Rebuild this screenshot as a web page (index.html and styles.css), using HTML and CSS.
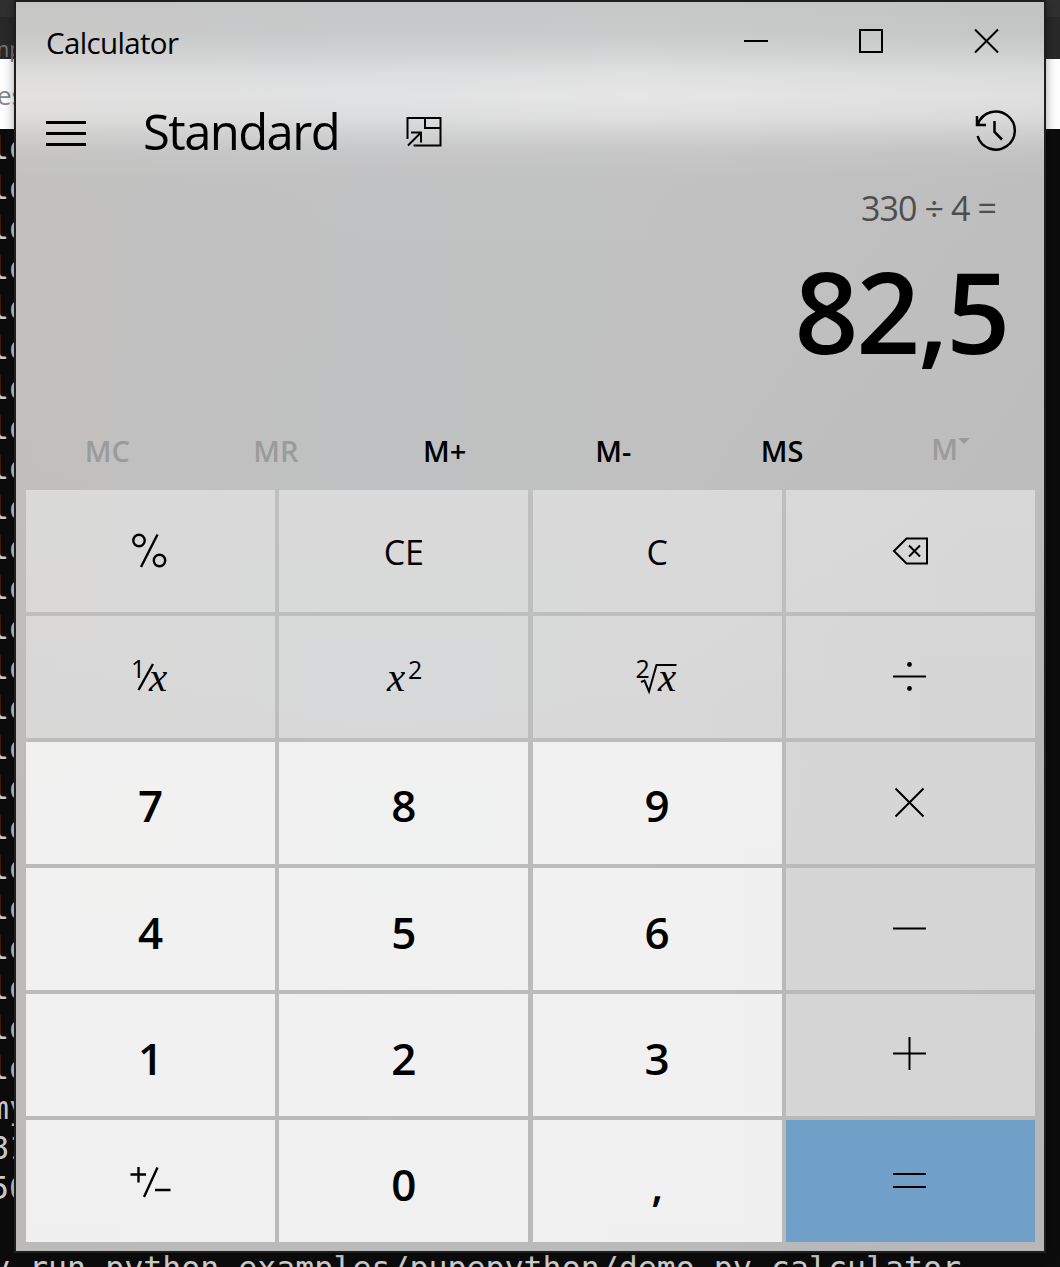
FILE: index.html
```html
<!DOCTYPE html>
<html lang="en">
<head>
<meta charset="utf-8">
<title>Calculator</title>
<link rel="stylesheet" href="styles.css">
</head>
<body>
<div class="desktop">
  <div class="tabs"><span>mp</span></div>
  <div class="toolbar"><span>es</span></div>
  <pre class="terminal">lo
lo
lo
lo
lo
lo
lo
lo
lo
lo
lo
lo
lo
lo
lo
lo
lo
lo
lo
lo
lo
lo
lo
lo
my
81
56

<span class="command">y run python examples/pupepython/demo.py calculator</span></pre>

  <main class="window">
    <header class="titlebar">
      <span class="title">Calculator</span>
      <div class="controls">
        <svg width="115" height="80" viewBox="0 0 115 80"><path d="M45 39h24"/></svg>
        <svg width="115" height="80" viewBox="0 0 115 80"><path d="M46 28h22v22h-22z"/></svg>
        <svg width="115" height="80" viewBox="0 0 115 80"><path d="M46 27.500l23 23M69 27.500l-23 23"/></svg>
      </div>
    </header>
    <nav class="modebar">
      <svg class="menu" width="40" height="28" viewBox="0 0 40 28"><path d="M0 2.500h40M0 13.500h40M0 24.500h40"/></svg>
      <h1 class="mode">Standard</h1>
      <svg class="pin" width="36" height="32" viewBox="0 0 36 32"><path d="M1.500 23V2h33v27.500H7.500M19 2v10h15.500M2 29.500L14 17.500M5 16.500h10v10"/></svg>
      <svg class="history" width="42" height="42" viewBox="0 0 42 42"><path d="M3 14A19 19 0 1 1 2.600 26M2 6v9h9M19.500 11v11l7.500 7.500"/></svg>
    </nav>
    <section class="display">
      <div class="expression">330 ÷ 4 =</div>
      <div class="result">82,5</div>
    </section>
    <div class="memory">
      <button class="off">MC</button><button class="off">MR</button><button>M+</button><button>M-</button><button>MS</button><button class="off list">M<svg width="12" height="7" viewBox="0 0 12 7"><path d="M0 0h12l-6 6z"/></svg></button>
    </div>
    <div class="keys">
      <button class="key"><svg class="sym" width="60" height="60" viewBox="0 0 60 60"><g class="heavy"><circle cx="19" cy="19.500" r="5.700"/><circle cx="39.500" cy="39.500" r="5.700"/><path d="M37.500 13.500L21 46"/></g></svg></button>
      <button class="key"><span>CE</span></button>
      <button class="key"><span>C</span></button>
      <button class="key op"><svg class="sym" width="60" height="60" viewBox="0 0 60 60"><path d="M14 30L26.500 17.500h20.500v25h-20.500zM29 24.500l11 11M40 24.500l-11 11"/></svg></button>

      <button class="key"><svg class="sym" width="60" height="60" viewBox="0 0 60 60"><text class="small" x="11" y="31">1</text><text class="var" x="29" y="44">x</text><path class="heavy" d="M33 17L18.500 43"/></svg></button>
      <button class="key"><svg class="sym" width="60" height="60" viewBox="0 0 60 60"><text class="var" x="13" y="44">x</text><text class="small" x="34" y="31.500">2</text></svg></button>
      <button class="key"><svg class="sym" width="60" height="60" viewBox="0 0 60 60"><text class="small" x="8.500" y="31">2</text><text class="var" x="31" y="44">x</text><path d="M14 35l3.500-1.500 4.500 11 7.500-26.500h20"/></svg></button>
      <button class="key op"><svg class="sym" width="60" height="60" viewBox="0 0 60 60"><path d="M13 29.500h33"/><circle class="dot" cx="29.500" cy="17.500" r="2.400"/><circle class="dot" cx="29.500" cy="41.500" r="2.400"/></svg></button>

      <button class="key num"><span>7</span></button>
      <button class="key num"><span>8</span></button>
      <button class="key num"><span>9</span></button>
      <button class="key op"><svg class="sym" width="60" height="60" viewBox="0 0 60 60"><path d="M15.500 15.500l28 28M43.500 15.500l-28 28"/></svg></button>

      <button class="key num"><span>4</span></button>
      <button class="key num"><span>5</span></button>
      <button class="key num"><span>6</span></button>
      <button class="key op"><svg class="sym" width="60" height="60" viewBox="0 0 60 60"><path d="M13 29.500h33"/></svg></button>

      <button class="key num"><span>1</span></button>
      <button class="key num"><span>2</span></button>
      <button class="key num"><span>3</span></button>
      <button class="key op"><svg class="sym" width="60" height="60" viewBox="0 0 60 60"><path d="M13 28.500h33M29.500 12v33"/></svg></button>

      <button class="key num"><svg class="sym" width="60" height="60" viewBox="0 0 60 60"><path class="heavy" d="M10.500 23.500h15.500M18.500 16v15.500M37.500 16.500L24 46M35 39h15.500"/></svg></button>
      <button class="key num"><span>0</span></button>
      <button class="key num"><span>,</span></button>
      <button class="key op equals"><svg class="sym" width="60" height="60" viewBox="0 0 60 60"><path d="M13 23h33M13 36h33"/></svg></button>
    </div>
  </main>
</div>
</body>
</html>
```
FILE: styles.css
```css
* {
  box-sizing: border-box;
}

body {
  margin: 0;
  font-family: "Open Sans", "Noto Sans", sans-serif;
  color: #000;
}

.desktop {
  position: relative;
  width: 1060px;
  height: 1267px;
  overflow: hidden;
  background: #0c0c0c;
}

.tabs {
  height: 59px;
  padding-top: 34px;
  background: linear-gradient(#303030 0 17px, #292929 17px);
  color: #777;
  font-size: 22px;
  line-height: 28px;
}

.tabs span {
  margin-left: -11px;
}

.toolbar {
  height: 70px;
  padding-top: 20px;
  background: #fff;
  color: #888;
  font-size: 26px;
  line-height: 32px;
}

.toolbar span {
  margin-left: -3px;
}

.terminal {
  margin: -1px 0 0 -10px;
  color: #ccc;
  font: 31.600px/40px "DejaVu Sans Mono", monospace;
}

.command {
  margin-left: 1px;
}

.window {
  position: absolute;
  left: 16px;
  top: 2px;
  width: 1028px;
  height: 1249px;
  display: flex;
  flex-direction: column;
  background:
    linear-gradient(90deg, rgba(194, 184, 172, .1), rgba(185, 193, 205, .1) 35%, rgba(150, 150, 150, 0) 60%, rgba(140, 140, 140, .07)),
    linear-gradient(#c6c7c7 0, #c9caca 30px, #d3d4d4 52px, #e0e1e1 72px, #e6e6e6 94px, #e0e0e0 115px, #d3d3d3 132px, #c7c7c7 150px, #c2c2c2 178px, #c0c0c0 480px, #bbb 850px, #bababa 100%);
  box-shadow: 0 0 0 2px #1e1e1e, 0 0 12px rgba(0, 0, 0, .5);
}

.titlebar {
  height: 80px;
  display: flex;
  align-items: center;
  justify-content: space-between;
}

.title {
  margin-left: 30px;
  font-size: 29.500px;
  letter-spacing: -.650px;
}

.controls {
  display: flex;
}

svg {
  display: block;
  fill: none;
  stroke: #000;
  stroke-width: 2;
}

.modebar {
  height: 100px;
  display: flex;
  align-items: center;
  padding-left: 30px;
  padding-right: 27px;
}

.menu {
  margin-top: 3px;
  stroke-width: 3;
}

.mode {
  margin: -2px 0 0 57px;
  width: 198px;
  font-size: 49px;
  font-weight: 400;
  letter-spacing: -1.600px;
  white-space: nowrap;
}

.pin {
  margin-left: 65px;
  margin-top: -1px;
}

.history {
  margin-left: auto;
  margin-top: -2px;
  stroke-width: 2.500;
}

.display {
  height: 220px;
  text-align: right;
}

.expression {
  padding-right: 48px;
  color: #4e4e4e;
  font-size: 34px;
  line-height: 53px;
  letter-spacing: -.900px;
}

.result {
  padding-right: 36px;
  font-size: 112px;
  font-weight: 600;
  line-height: 151px;
  letter-spacing: -2.300px;
}

button {
  border: 0;
  padding: 0;
  background: none;
  font: inherit;
  color: inherit;
}

.memory {
  height: 88px;
  display: grid;
  grid-template-columns: repeat(6, 1fr);
  padding: 8px 9px 0 7px;
  font-size: 29px;
  font-weight: 600;
}

.off {
  color: #9b9b9b;
}

.list {
  display: flex;
  align-items: center;
  justify-content: center;
  padding-bottom: 3px;
}

.list svg {
  margin-top: -15px;
  fill: #9b9b9b;
  stroke: none;
}

.keys {
  flex: 1;
  display: grid;
  grid-template-columns: repeat(4, 1fr);
  grid-template-rows: repeat(6, 1fr);
  gap: 4.400px;
  padding: 0 9px 9px 10px;
}

.key {
  display: flex;
  align-items: center;
  justify-content: center;
  background: rgba(255, 255, 255, .41);
  font-size: 34px;
}

.key span {
  padding-top: 3px;
}

.num {
  background: rgba(255, 255, 255, .79);
  font-size: 44px;
  font-weight: 600;
}

.num span {
  padding-top: 5px;
}

.op {
  padding-right: 2px;
}

.equals {
  background: #709fc7;
}

.small {
  fill: #000;
  stroke: none;
  font-size: 25px;
}

.var {
  fill: #000;
  stroke: none;
  font: italic 41px "Liberation Serif", serif;
}

.dot {
  fill: #000;
  stroke: none;
}

.heavy {
  stroke-width: 2.400;
}
```
